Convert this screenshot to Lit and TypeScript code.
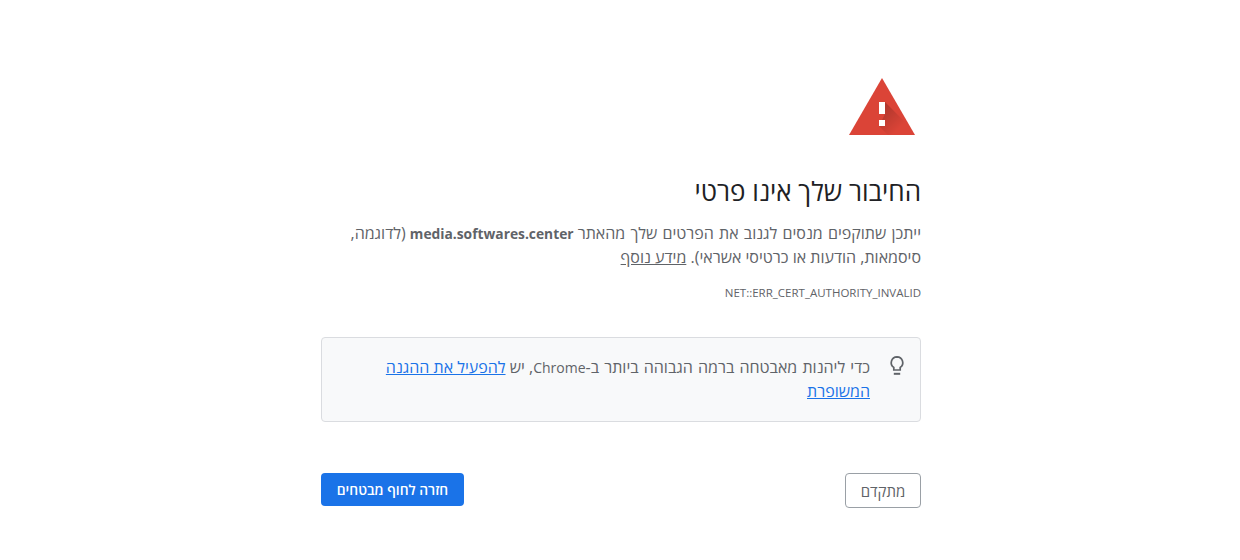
import { LitElement, css, html } from 'lit'
import { customElement } from 'lit/decorators.js'

@customElement('app-root')
export class AppRoot extends LitElement {
  static styles = css`
    :host {
      display: block;
      height: 560px;
      overflow: hidden;
      background: #fff;
      font-family: "Open Sans", "Liberation Sans", sans-serif;
      color: #5f6368;
    }

    .page {
      box-sizing: border-box;
      width: 600px;
      margin-left: 321px;
      padding-top: 78px;
      display: flex;
      flex-direction: column;
    }

    .warning {
      display: block;
      width: 66px;
      height: 57px;
      margin-inline-start: 6px;
    }

    h1 {
      margin: 40px 0 0;
      font-size: 26px;
      font-weight: 400;
      line-height: 32px;
      color: #202124;
    }

    .desc {
      margin: 14px 0 0;
      font-size: 16px;
      line-height: 24px;
    }

    .wide {
      word-spacing: 1px;
    }

    .desc strong {
      font-size: 13.8px;
      line-height: 1;
      font-weight: 700;
    }

    .desc a {
      color: #5f6368;
    }

    .code {
      margin-top: 15px;
      font-size: 11.5px;
      line-height: 18px;
      text-align: right;
    }

    .tip {
      box-sizing: border-box;
      margin-top: 35px;
      height: 85px;
      padding: 17px 14px 0 16px;
      display: flex;
      gap: 18px;
      background: #f8f9fa;
      border: 1px solid #dadce0;
      border-radius: 4px;
      font-size: 16px;
      line-height: 24px;
    }

    .tip svg {
      flex: none;
      width: 18px;
      height: 22px;
    }

    .latin {
      font-size: 14px;
      line-height: 1;
    }

    .tip a {
      color: #1a73e8;
    }

    .actions {
      margin-top: 51px;
      display: flex;
      justify-content: space-between;
      align-items: flex-start;
    }

    button {
      box-sizing: border-box;
      border-radius: 4px;
      font: inherit;
      padding: 0;
    }

    .advanced {
      width: 76px;
      height: 35px;
      background: #fff;
      border: 1px solid #9aa0a6;
      color: #5f6368;
      font-size: 15px;
    }

    .back {
      width: 143px;
      height: 33px;
      background: #1a73e8;
      border: none;
      color: #fff;
      font-size: 13.8px;
      font-weight: 600;
    }
  `

  render() {
    return html`
      <main class="page" dir="rtl">
        <svg class="warning" viewBox="0 0 66 57" aria-hidden="true">
          <defs>
            <linearGradient id="shade" gradientUnits="userSpaceOnUse" x1="33" y1="30" x2="52" y2="49">
              <stop offset="0" stop-color="#000" stop-opacity="0.2" />
              <stop offset="1" stop-color="#000" stop-opacity="0" />
            </linearGradient>
          </defs>
          <polygon points="33,0 66,57 0,57" fill="#db4437" />
          <polygon points="36,24 61.9,49.9 66,57 39,57 30,48 36,36" fill="url(#shade)" />
          <rect x="30" y="24" width="6" height="12" fill="#fff" />
          <rect x="30" y="42" width="6" height="6" fill="#fff" />
        </svg>
        <h1>החיבור שלך אינו פרטי</h1>
        <p class="desc">
          <span class="wide">ייתכן שתוקפים מנסים לגנוב את הפרטים שלך מהאתר</span>
          <strong>media.softwares.center</strong> (לדוגמה, סיסמאות, הודעות או כרטיסי
          אשראי). <a href="#">מידע נוסף</a>
        </p>
        <div class="code" dir="ltr">NET::ERR_CERT_AUTHORITY_INVALID</div>
        <div class="tip">
          <svg viewBox="0 0 18 22" aria-hidden="true">
            <path
              d="M9 1.8a5.8 5.8 0 0 0-3.2 10.6v2.6h6.4v-2.6a5.8 5.8 0 0 0-3.2-10.6z"
              fill="none"
              stroke="#5f6368"
              stroke-width="1.7"
            />
            <rect x="5.8" y="17.8" width="6.4" height="2" fill="#5f6368" />
          </svg>
          <div>
            <span class="wide">כדי ליהנות מאבטחה ברמה הגבוהה ביותר ב-</span><span class="latin">Chrome</span>, יש
            <a href="#">להפעיל את ההגנה המשופרת</a>
          </div>
        </div>
        <div class="actions">
          <button class="advanced">מתקדם</button>
          <button class="back">חזרה לחוף מבטחים</button>
        </div>
      </main>
    `
  }
}
